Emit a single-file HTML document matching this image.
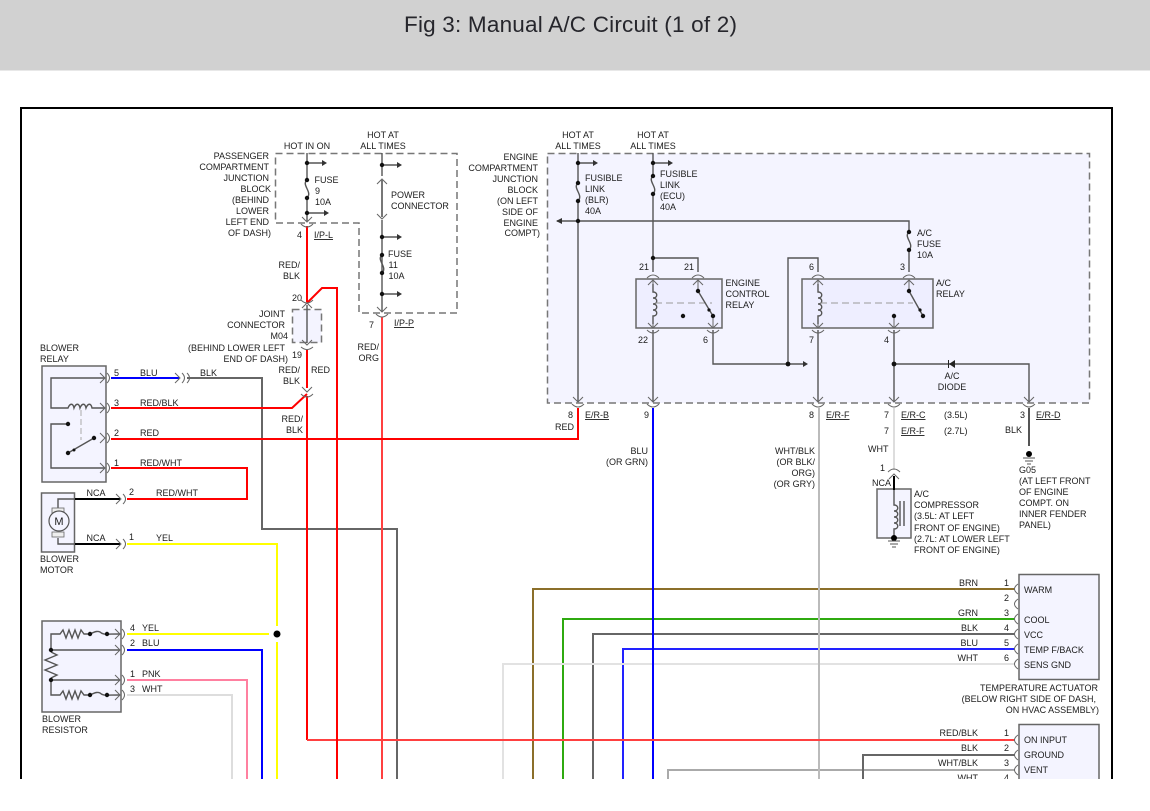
<!DOCTYPE html>
<html><head><meta charset="utf-8"><style>
html,body{margin:0;padding:0;background:#fff;width:1150px;height:811px;overflow:hidden}
svg{display:block}
text{font-family:"Liberation Sans",Arial,sans-serif;font-size:9px;fill:#1c1c1c}
.e{text-anchor:end}.m{text-anchor:middle}.u{text-decoration:underline}
.w{fill:none;stroke-width:2}
.g{fill:none;stroke:#555;stroke-width:1.4}
.c{fill:none;stroke:#666;stroke-width:1}
</style></head><body>
<svg width="1150" height="811" viewBox="0 0 1150 811" xmlns="http://www.w3.org/2000/svg">
<defs>
<clipPath id="cl"><rect x="0" y="0" width="1150" height="779"/></clipPath>
<g id="cd"><path class="c" d="M-5-6L0-1L5-6M-6 1Q0 7 6 1"/></g>
<g id="cu"><path class="c" d="M-5 6L0 1L5 6M-6-1Q0-7 6-1"/></g>
<g id="cr"><path class="c" d="M-6-5L-1 0L-6 5M1-5Q6 0 1 5"/></g>
<g id="al"><path class="c" d="M4-5Q-3 0 4 5"/></g>
<g id="ar"><path fill="#333" d="M0-3L5 0L0 3Z"/></g>
<g id="coil"><path class="g" d="M0 0V8C5 8 5 14 0 14C5 14 5 20 0 20C5 20 5 26 0 26C5 26 5 32 0 32V40"/></g>
<g id="fuse"><path class="g" d="M0 0C-6 5 6 12 0 18"/><circle cy="0" r="2.2" fill="#111"/><circle cy="18" r="2.2" fill="#111"/></g>
<g id="gnd"><path d="M-6 0H6M-4 3H4M-2 6H2" stroke="#555" fill="none"/></g>
</defs>
<rect width="1150" height="70.5" fill="#d1d1d1"/>
<text x="404" y="32" textLength="333" lengthAdjust="spacing" style="font-size:22.5px;fill:#26262c">Fig 3: Manual A/C Circuit (1 of 2)</text>

<g clip-path="url(#cl)">
<path d="M21 779V108H1112V779" fill="none" stroke="#000" stroke-width="2"/>

<!-- blocks -->
<path d="M547.5 153.5H1089.5V403H547.5Z" fill="#f4f4ff" stroke="#777" stroke-width="1.5" stroke-dasharray="7 4"/>
<path d="M275.5 153.5H457V313H359V223H275.5Z" fill="none" stroke="#777" stroke-width="1.5" stroke-dasharray="7 4"/>
<rect x="292.5" y="309.5" width="29" height="33" fill="#f4f4ff" stroke="#777" stroke-width="1.5" stroke-dasharray="7 4"/>
<rect x="42" y="366" width="64" height="116" fill="#f4f4ff" stroke="#666" stroke-width="1.5"/>
<rect x="41.5" y="493" width="33" height="59" fill="#f4f4ff" stroke="#666" stroke-width="1.5"/>
<rect x="42" y="621" width="79" height="91" fill="#f4f4ff" stroke="#666" stroke-width="1.5"/>
<rect x="636" y="279" width="86" height="49" fill="#eeeeff" stroke="#666" stroke-width="1.5"/>
<rect x="802" y="279" width="131" height="49" fill="#eeeeff" stroke="#666" stroke-width="1.5"/>
<rect x="877" y="489" width="34" height="49" fill="#f4f4ff" stroke="#666" stroke-width="1.5"/>
<rect x="1019" y="574.5" width="80" height="105" fill="#f4f4ff" stroke="#666" stroke-width="1.5"/>
<path d="M1019 779V724.5H1099V779" fill="#f4f4ff" stroke="#666" stroke-width="1.5"/>

<!-- long wires -->
<path class="w" stroke="#666" d="M187 378H262V529H397V779"/>
<path class="w" stroke="#8b6f2a" d="M1015 589H533V779"/>
<path class="w" stroke="#2faa10" d="M1015 619H563V779"/>
<path class="w" stroke="#666" d="M1015 634H593V779"/>
<path class="w" stroke="#2222ff" d="M1015 649H623V779"/>
<path class="w" stroke="#e2e2e2" d="M1015 664H503V779"/>
<path class="w" stroke="#aaa" d="M1015 770H668V779"/>
<path class="w" stroke="#666" d="M1015 755H863V779"/>
<path class="w" stroke="#bbb" d="M819 408V779"/>
<path class="w" stroke="#00f" d="M653 408V779"/>
<path class="w" stroke="#ff4040" d="M382 317V779"/>
<path class="w" stroke="#f00" d="M307 350V388M307 396V740"/>
<path class="w" stroke="#ff4040" d="M307 740H1015"/>
<path class="w" stroke="#f00" d="M307 226V302"/>
<path class="w" stroke="#f00" d="M307 303L322 288H337V779"/>
<path class="w" stroke="#f00" d="M111 408H292L307 394"/>
<path class="w" stroke="#f00" d="M111 439H578V408"/>
<path class="w" stroke="#f00" d="M111 468H247V499H127"/>
<path class="w" stroke="#00f" d="M111 378H179"/>
<path class="w" stroke="#000" d="M75 499H120M75 544H120"/>
<path class="w" stroke="#ff0" d="M127 544H277V626M277 642V779M127 634H269"/>
<circle cx="277" cy="634" r="3.5" fill="#000"/>
<path class="w" stroke="#00f" d="M127 650H262V779"/>
<path class="w" stroke="#ff80a0" d="M127 680H247V779"/>
<path class="w" stroke="#ddd" d="M127 695H232V779"/>
<path class="w" stroke="#ddd" d="M894 408V470"/>
<path class="w" stroke="#000" d="M894 476V490"/>
<path class="w" stroke="#555" d="M1029 408V446"/>

<!-- PCJB internals -->
<path class="g" d="M307 153V180M307 198V221M382 153V176M382 220V312M382 236V255M307 305V343"/>
<path class="g" d="M307 163H322M307 213H324M382 165H397M382 237H397M382 294H397"/>
<use href="#ar" x="322" y="163"/><use href="#ar" x="324" y="213"/><use href="#ar" x="397" y="165"/><use href="#ar" x="397" y="237"/><use href="#ar" x="397" y="294"/>
<circle cx="307" cy="163" r="2.2" fill="#111"/><circle cx="307" cy="213" r="2.2" fill="#111"/><circle cx="382" cy="165" r="2.2" fill="#111"/><circle cx="382" cy="237" r="2.2" fill="#111"/><circle cx="382" cy="294" r="2.2" fill="#111"/>
<use href="#fuse" x="307" y="180"/><use href="#fuse" x="382" y="255"/>
<path class="g" d="M382 180V217" style="stroke-width:2;stroke:#777"/>
<path class="c" d="M377 184L382 179L387 184M377 214L382 219L387 214"/>
<use href="#cd" x="307" y="223"/><use href="#cd" x="382" y="313"/>
<path class="c" d="M302 308L307 303L312 308M302 340L307 345L312 340"/>
<path class="c" d="M301 347Q307 352 313 347M301 300Q307 306 313 300"/>
<use href="#cd" x="307" y="393"/>

<!-- EJB internals -->
<path class="g" d="M578 153V183M578 201V402M653 153V176M653 194V272M557 221H909V232M909 250V272M653 258H698V272M653 163H668M578 163H593"/>
<path class="g" d="M653 330V402M713 330V364H803M788 364V258H818V272M818 330V402M894 330V402M894 364H1029V402"/>
<use href="#ar" x="593" y="163"/><use href="#ar" x="668" y="163"/><use href="#ar" x="803" y="364"/>
<path fill="#333" d="M562 218V224L556 221Z"/>
<g fill="#111"><circle cx="578" cy="163" r="2.2"/><circle cx="653" cy="163" r="2.2"/><circle cx="578" cy="221" r="2.2"/><circle cx="653" cy="258" r="2.2"/><circle cx="788" cy="364" r="2.4"/><circle cx="894" cy="364" r="2.4"/></g>
<use href="#fuse" x="578" y="183"/><use href="#fuse" x="653" y="176"/><use href="#fuse" x="909" y="232"/>
<!-- ECR -->
<use href="#cu" x="653" y="279"/><use href="#cu" x="698" y="279"/><use href="#cd" x="653" y="329"/><use href="#cd" x="713" y="329"/>
<use href="#coil" x="653" y="284"/>
<path class="c" d="M653 280V284M653 324V328M698 280V291M713 316V328"/>
<path d="M655 303H712" stroke="#999" stroke-dasharray="7 4" fill="none"/>
<path class="g" d="M698 291L713 316"/>
<g fill="#111"><circle cx="698" cy="291" r="2.2"/><circle cx="713" cy="316" r="2.2"/><circle cx="709" cy="310" r="1.6"/><circle cx="683" cy="316" r="2.2"/></g>
<!-- AC relay -->
<use href="#cu" x="818" y="279"/><use href="#cu" x="909" y="279"/><use href="#cd" x="818" y="329"/><use href="#cd" x="894" y="329"/>
<use href="#coil" x="818" y="284"/>
<path class="c" d="M818 280V284M818 324V328M909 280V291M894 316V328"/>
<path d="M820 303H913" stroke="#999" stroke-dasharray="7 4" fill="none"/>
<path class="g" d="M909 291L923 316"/>
<g fill="#111"><circle cx="909" cy="291" r="2.2"/><circle cx="923" cy="316" r="2.2"/><circle cx="920" cy="310" r="1.6"/><circle cx="894" cy="316" r="2.2"/></g>
<!-- diode -->
<path fill="#222" d="M949 364L955 360V368Z"/><path d="M948.5 360V368" stroke="#222"/>
<use href="#cd" x="578" y="403"/><use href="#cd" x="653" y="403"/><use href="#cd" x="818" y="403"/><use href="#cd" x="894" y="403"/><use href="#cd" x="1029" y="403"/>
<use href="#cu" x="894" y="473"/>

<!-- G05 -->
<circle cx="1029" cy="454" r="3" fill="#000"/><use href="#gnd" x="1029" y="458"/>
<!-- compressor -->
<use href="#coil" x="894" y="497"/>
<path class="g" d="M894 490V497M900 501V526M904 501V526"/>
<circle cx="894" cy="538" r="3" fill="#000"/><use href="#gnd" x="894" y="541"/>

<!-- blower relay internals -->
<path class="g" d="M105 378H51V408H68C70 403 73 403 74 408C76 403 79 403 80 408C82 403 85 403 86 408C88 403 91 403 92 408H105"/>
<path d="M81 410V440" stroke="#aaa" stroke-dasharray="6 3" fill="none"/>
<path class="g" d="M68 424H51V468H105M68 453L94 438"/>
<g fill="#111"><circle cx="68" cy="424" r="2.2"/><circle cx="68" cy="453" r="2.2"/><circle cx="94" cy="438" r="2.2"/><circle cx="74" cy="450" r="1.5"/></g>
<use href="#cr" x="106" y="378"/><use href="#cr" x="106" y="408"/><use href="#cr" x="106" y="438"/><use href="#cr" x="106" y="468"/>
<use href="#cr" x="181" y="378"/><path class="c" d="M187 373Q192 378 187 383"/>
<use href="#cr" x="122" y="499"/><use href="#cr" x="122" y="544"/>

<!-- motor -->
<path class="g" d="M75 499H58V508M58 538V544H75"/>
<rect x="52" y="508" width="12" height="5" fill="#eee" stroke="#666" stroke-width=".8"/><rect x="52" y="532" width="12" height="5" fill="#eee" stroke="#666" stroke-width=".8"/>
<circle cx="59" cy="521" r="10" fill="#f4f4ff" stroke="#555" stroke-width="1.2"/>
<text x="59" y="525" class="m" style="font-size:11px">M</text>

<!-- resistor internals -->
<path class="g" d="M51 650V634H60L63 630L66 638L69 630L72 638L75 630L78 638L81 630L84 634H90C96 631 98 631 100 632C103 635 105 634 120 634"/>
<path class="g" d="M51 680V695H60L63 691L66 699L69 691L72 699L75 691L78 699L81 691L84 695H90C96 692 98 692 100 693C103 696 105 695 120 695"/>
<path class="g" d="M51 650H120M51 680H120"/>
<path class="g" d="M51 652L57 655L45 660L57 665L45 670L57 675L51 678"/>
<g fill="#111"><circle cx="90" cy="634" r="2.2"/><circle cx="107" cy="634" r="2.2"/><circle cx="51" cy="650" r="2.2"/><circle cx="51" cy="680" r="2.2"/><circle cx="90" cy="695" r="2.2"/><circle cx="107" cy="695" r="2.2"/></g>
<use href="#cr" x="121" y="634"/><use href="#cr" x="121" y="650"/><use href="#cr" x="121" y="680"/><use href="#cr" x="121" y="695"/>

<!-- actuator arcs -->
<use href="#al" x="1014" y="589"/><use href="#al" x="1014" y="604"/><use href="#al" x="1014" y="619"/><use href="#al" x="1014" y="634"/><use href="#al" x="1014" y="649"/><use href="#al" x="1014" y="664"/><use href="#al" x="1014" y="740"/><use href="#al" x="1014" y="755"/><use href="#al" x="1014" y="770"/>

<!-- text -->
<text x="307" y="149" class="m">HOT IN ON</text>
<text x="383" y="138" class="m">HOT AT</text><text x="383" y="149" class="m">ALL TIMES</text>
<text x="269" y="159" class="e">PASSENGER</text><text x="269" y="170" class="e">COMPARTMENT</text><text x="269" y="181" class="e">JUNCTION</text><text x="271" y="192" class="e">BLOCK</text><text x="269" y="203" class="e">(BEHIND</text><text x="269" y="214" class="e">LOWER</text><text x="269" y="225" class="e">LEFT END</text><text x="271" y="236" class="e">OF DASH)</text>
<text x="314.5" y="183">FUSE</text><text x="315" y="194">9</text><text x="315" y="205">10A</text>
<text x="391" y="198">POWER</text><text x="391" y="209">CONNECTOR</text>
<text x="388" y="257">FUSE</text><text x="388.5" y="268">11</text><text x="388.5" y="279">10A</text>
<text x="297" y="238">4</text><text x="314" y="238" class="u">I/P-L</text>
<text x="300" y="268" class="e">RED/</text><text x="300" y="279" class="e">BLK</text>
<text x="292" y="301">20</text>
<text x="285" y="317" class="e">JOINT</text><text x="285" y="328" class="e">CONNECTOR</text><text x="288" y="339" class="e">M04</text>
<text x="285" y="351" class="e">(BEHIND LOWER LEFT</text><text x="288" y="362" class="e">END OF DASH)</text>
<text x="292" y="358">19</text>
<text x="300" y="373" class="e">RED/</text><text x="300" y="384" class="e">BLK</text><text x="311" y="373">RED</text>
<text x="369" y="328">7</text><text x="394" y="326" class="u">I/P-P</text>
<text x="379" y="350" class="e">RED/</text><text x="379" y="361" class="e">ORG</text>

<text x="40" y="351">BLOWER</text><text x="40" y="362">RELAY</text>
<text x="114" y="376">5</text><text x="140" y="376">BLU</text><text x="200" y="376">BLK</text>
<text x="114" y="406">3</text><text x="140" y="406">RED/BLK</text>
<text x="114" y="436">2</text><text x="140" y="436">RED</text>
<text x="114" y="466">1</text><text x="140" y="466">RED/WHT</text>
<text x="303" y="422" class="e">RED/</text><text x="303" y="433" class="e">BLK</text>
<text x="86.5" y="496">NCA</text><text x="129" y="495">2</text><text x="156" y="496">RED/WHT</text>
<text x="86.5" y="541">NCA</text><text x="129" y="540">1</text><text x="156" y="541">YEL</text>
<text x="40" y="562">BLOWER</text><text x="40" y="573">MOTOR</text>
<text x="130" y="631">4</text><text x="142" y="631">YEL</text>
<text x="130" y="646">2</text><text x="142" y="646">BLU</text>
<text x="130" y="677">1</text><text x="142" y="677">PNK</text>
<text x="130" y="692">3</text><text x="142" y="692">WHT</text>
<text x="42" y="722">BLOWER</text><text x="42" y="733">RESISTOR</text>

<text x="578" y="138" class="m">HOT AT</text><text x="578" y="149" class="m">ALL TIMES</text>
<text x="653" y="138" class="m">HOT AT</text><text x="653" y="149" class="m">ALL TIMES</text>
<text x="538" y="160" class="e">ENGINE</text><text x="538" y="171" class="e">COMPARTMENT</text><text x="538" y="182" class="e">JUNCTION</text><text x="538" y="193" class="e">BLOCK</text><text x="538" y="204" class="e">(ON LEFT</text><text x="538" y="215" class="e">SIDE OF</text><text x="538" y="226" class="e">ENGINE</text><text x="540" y="236" class="e">COMPT)</text>
<text x="585" y="181">FUSIBLE</text><text x="585" y="192">LINK</text><text x="585" y="203">(BLR)</text><text x="585" y="214">40A</text>
<text x="660" y="177">FUSIBLE</text><text x="660" y="188">LINK</text><text x="660" y="199">(ECU)</text><text x="660" y="210">40A</text>
<text x="639" y="270">21</text><text x="684" y="270">21</text>
<text x="725.5" y="286">ENGINE</text><text x="725.5" y="297">CONTROL</text><text x="725.5" y="308">RELAY</text>
<text x="638" y="343">22</text><text x="703" y="343">6</text>
<text x="809" y="270">6</text><text x="809" y="343">7</text>
<text x="917" y="236">A/C</text><text x="917" y="247">FUSE</text><text x="917" y="258">10A</text>
<text x="900" y="270">3</text>
<text x="936" y="286">A/C</text><text x="936" y="297">RELAY</text>
<text x="884" y="343">4</text>
<text x="952" y="379" class="m">A/C</text><text x="952" y="390" class="m">DIODE</text>
<text x="568" y="418">8</text><text x="585" y="418" class="u">E/R-B</text><text x="574" y="430" class="e">RED</text>
<text x="644" y="418">9</text>
<text x="809" y="418">8</text><text x="826" y="418" class="u">E/R-F</text>
<text x="884" y="418">7</text><text x="901" y="418" class="u">E/R-C</text><text x="944" y="418">(3.5L)</text>
<text x="884" y="434">7</text><text x="901" y="434" class="u">E/R-F</text><text x="944" y="434">(2.7L)</text>
<text x="1020" y="418">3</text><text x="1036" y="418" class="u">E/R-D</text>
<text x="1005" y="433">BLK</text>
<text x="648" y="454" class="e">BLU</text><text x="648" y="465" class="e">(OR GRN)</text>
<text x="815" y="454" class="e">WHT/BLK</text><text x="815" y="465" class="e">(OR BLK/</text><text x="815" y="476" class="e">ORG)</text><text x="815" y="487" class="e">(OR GRY)</text>
<text x="868" y="452">WHT</text><text x="880" y="471">1</text><text x="872" y="486">NCA</text>
<text x="914" y="497">A/C</text><text x="914" y="508">COMPRESSOR</text><text x="914" y="519">(3.5L: AT LEFT</text><text x="914" y="531">FRONT OF ENGINE)</text><text x="914" y="542">(2.7L: AT LOWER LEFT</text><text x="914" y="553">FRONT OF ENGINE)</text>
<text x="1019" y="473">G05</text><text x="1019" y="484">(AT LEFT FRONT</text><text x="1019" y="495">OF ENGINE</text><text x="1019" y="506">COMPT. ON</text><text x="1019" y="517">INNER FENDER</text><text x="1019" y="528">PANEL)</text>

<text x="978" y="586" class="e">BRN</text><text x="978" y="616" class="e">GRN</text><text x="978" y="631" class="e">BLK</text><text x="978" y="646" class="e">BLU</text><text x="978" y="661" class="e">WHT</text>
<text x="1004" y="586">1</text><text x="1004" y="601">2</text><text x="1004" y="616">3</text><text x="1004" y="631">4</text><text x="1004" y="646">5</text><text x="1004" y="661">6</text>
<text x="1024" y="593">WARM</text><text x="1024" y="623">COOL</text><text x="1024" y="638">VCC</text><text x="1024" y="653">TEMP F/BACK</text><text x="1024" y="668">SENS GND</text>
<text x="1098" y="691" class="e">TEMPERATURE ACTUATOR</text><text x="1096" y="702" class="e">(BELOW RIGHT SIDE OF DASH,</text><text x="1099" y="713" class="e">ON HVAC ASSEMBLY)</text>
<text x="978" y="736" class="e">RED/BLK</text><text x="978" y="751" class="e">BLK</text><text x="978" y="766" class="e">WHT/BLK</text><text x="978" y="781" class="e">WHT</text>
<text x="1004" y="736">1</text><text x="1004" y="751">2</text><text x="1004" y="766">3</text><text x="1004" y="781">4</text>
<text x="1024" y="743">ON INPUT</text><text x="1024" y="758">GROUND</text><text x="1024" y="773">VENT</text>
</g>
</svg>
</body></html>
